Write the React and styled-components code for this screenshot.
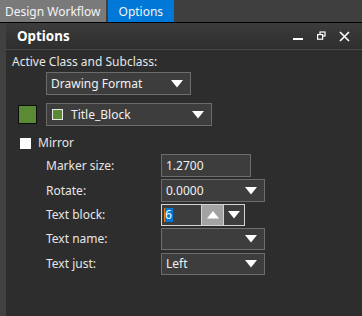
import React from "react";
import styled, { createGlobalStyle } from "styled-components";

const Global = createGlobalStyle`
  html, body { margin: 0; padding: 0; background: #2d2d2d; }
  body { font-family: "Noto Sans", "Open Sans", sans-serif; }
  * { box-sizing: border-box; }
`;

const Root = styled.div`
  width: 362px;
  height: 316px;
  display: flex;
  flex-direction: column;
  background: #2d2d2d;
  overflow: hidden;
  font-size: 12px;
  color: #e6e6e6;
`;

const TabBar = styled.div`
  height: 23px;
  display: flex;
  gap: 2px;
  background: #3f3f3f;
  border-bottom: 1px solid #000;
`;

const Tab = styled.div`
  height: 22px;
  display: flex;
  align-items: center;
  padding: 0 ${(p) => p.$pad}px;
  background: ${(p) => (p.$active ? "#0078d7" : "#7a7a7a")};
  color: #f4f4f4;
  font-size: 12px;
`;

const Body = styled.div`
  flex: 1;
  display: flex;
`;

const Strip = styled.div`
  width: 6px;
  background: #414141;
`;

const Panel = styled.div`
  flex: 1;
  display: flex;
  flex-direction: column;
  background: #2d2d2d;
`;

const Header = styled.div`
  height: 27px;
  display: flex;
  align-items: center;
  padding: 0 12px 0 11px;
  background: linear-gradient(#3c3c3c, #2e2e2e);
  border-bottom: 1px solid #484848;
`;

const Title = styled.div`
  flex: 1;
  font-weight: 700;
  font-size: 13.4px;
  color: #fff;
`;

const WinButtons = styled.div`
  display: flex;
  align-items: center;
  gap: 13px;
`;

const Content = styled.div`
  display: flex;
  flex-direction: column;
  padding: 4px 0 0 6px;
`;

const Caption = styled.div`
  height: 16px;
  line-height: 16px;
`;

const Combo = styled.div`
  width: ${(p) => p.$w}px;
  height: ${(p) => p.$h || 23}px;
  display: flex;
  align-items: center;
  gap: ${(p) => p.$gap || 0}px;
  padding: 0 7px 0 ${(p) => p.$pl || 4}px;
  background: #3d3d3d;
  border: 1px solid #6c6c6c;
  color: #f0f0f0;
  font-size: 12px;
`;

const ComboText = styled.span`
  flex: 1;
`;

const Row = styled.div`
  display: flex;
  align-items: center;
  line-height: 16px;
  margin-left: ${(p) => p.$ml || 0}px;
  margin-top: ${(p) => p.$mt || 0}px;
  gap: ${(p) => p.$gap || 0}px;
`;

const Swatch = styled.div`
  width: 19px;
  height: 19px;
  background: #5b8a35;
  border: 1px solid #0c0c0c;
`;

const SmallSwatch = styled.div`
  width: 11px;
  height: 11px;
  background: #5b8a35;
  border: 1px solid #e8e8e8;
`;

const Check = styled.div`
  width: 11px;
  height: 11px;
  background: #fff;
`;

const Label = styled.div`
  width: 115px;
`;

const Field = styled.div`
  width: ${(p) => p.$w}px;
  height: 23px;
  display: flex;
  align-items: center;
  padding-left: 4px;
  background: #3d3d3d;
  border: 1px solid #6c6c6c;
  color: #f0f0f0;
  font-size: 12px;
`;

const Spin = styled.div`
  width: 84px;
  height: 22px;
  display: flex;
  border: 1px solid #d4d4d4;
  background: #3d3d3d;
`;

const SpinInput = styled.div`
  flex: 1;
  display: flex;
  align-items: center;
  padding-left: 2px;
  border-right: 1px solid #d4d4d4;
  font-size: 12px;
`;

const Caret = styled.span`
  display: inline-block;
  width: 1px;
  height: 14px;
  background: #e07a1a;
`;

const Sel = styled.span`
  background: #0078d7;
  color: #fff;
  line-height: 14px;
  padding-right: 1px;
`;

const SpinBtn = styled.div`
  width: 21px;
  display: flex;
  align-items: center;
  justify-content: center;
  background: ${(p) => (p.$pressed ? "#a3a3a3" : "#3d3d3d")};
  border-left: ${(p) => (p.$sep ? "1px solid #d4d4d4" : "none")};
`;

const Down = () => (
  <svg width="12" height="8" viewBox="0 0 12 8">
    <path d="M0 0 H12 L6 7.5 Z" fill="#fff" />
  </svg>
);
const Up = () => (
  <svg width="12" height="8" viewBox="0 0 12 8">
    <path d="M0 7.5 H12 L6 0 Z" fill="#fff" />
  </svg>
);

export default function App() {
  return (
    <Root>
      <Global />
      <TabBar>
        <Tab $pad={5}>Design Workflow</Tab>
        <Tab $active $pad={11}>Options</Tab>
      </TabBar>
      <Body>
        <Strip />
        <Panel>
          <Header>
            <Title>Options</Title>
            <WinButtons>
              <svg width="11" height="10" viewBox="0 0 11 10">
                <rect x="0" y="7" width="10" height="2" fill="#fff" />
              </svg>
              <svg width="9" height="10" viewBox="0 0 9 10">
                <rect x="3" y="1" width="5" height="4" fill="none" stroke="#fff" strokeWidth="1.2" />
                <rect x="0.6" y="3.6" width="5" height="4.6" fill="#2f2f2f" stroke="#fff" strokeWidth="1.2" />
              </svg>
              <svg width="11" height="11" viewBox="0 0 11 11">
                <path d="M1 1 L10 10 M10 1 L1 10" stroke="#fff" strokeWidth="1.6" />
              </svg>
            </WinButtons>
          </Header>
          <Content>
            <Caption>Active Class and Subclass:</Caption>
            <Row $ml={34} $mt={2}>
              <Combo $w={145}>
                <ComboText>Drawing Format</ComboText>
                <Down />
              </Combo>
            </Row>
            <Row $ml={6} $mt={8} $gap={9}>
              <Swatch />
              <Combo $w={166} $pl={5} $gap={8}>
                <SmallSwatch />
                <ComboText>Title_Block</ComboText>
                <Down />
              </Combo>
            </Row>
            <Row $ml={8} $mt={9} $gap={7}>
              <Check />
              <span>Mirror</span>
            </Row>
            <Row $ml={34} $mt={3}>
              <Label>Marker size:</Label>
              <Field $w={90}>1.2700</Field>
            </Row>
            <Row $ml={34} $mt={2}>
              <Label>Rotate:</Label>
              <Combo $w={104}>
                <ComboText>0.0000</ComboText>
                <Down />
              </Combo>
            </Row>
            <Row $ml={34} $mt={2}>
              <Label>Text block:</Label>
              <Spin>
                <SpinInput>
                  <Caret />
                  <Sel>6</Sel>
                </SpinInput>
                <SpinBtn $pressed>
                  <Up />
                </SpinBtn>
                <SpinBtn $sep>
                  <Down />
                </SpinBtn>
              </Spin>
            </Row>
            <Row $ml={34} $mt={2}>
              <Label>Text name:</Label>
              <Combo $w={104} $h={22}>
                <ComboText />
                <Down />
              </Combo>
            </Row>
            <Row $ml={34} $mt={3}>
              <Label>Text just:</Label>
              <Combo $w={104} $h={22}>
                <ComboText>Left</ComboText>
                <Down />
              </Combo>
            </Row>
          </Content>
        </Panel>
      </Body>
    </Root>
  );
}
